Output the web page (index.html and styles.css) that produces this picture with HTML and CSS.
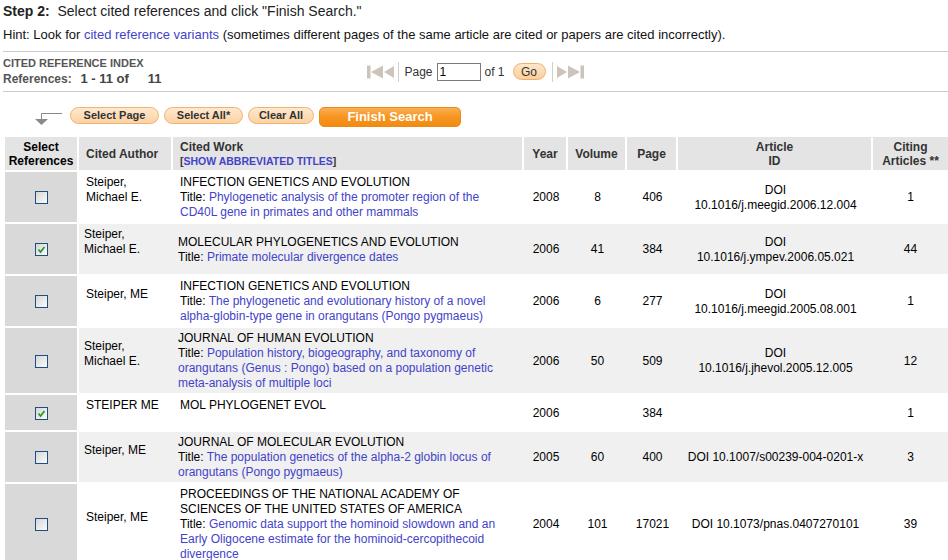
FILE: index.html
```html
<!DOCTYPE html>
<html lang="en">
<head>
<meta charset="utf-8">
<title>Cited Reference Search - Step 2</title>
<link rel="stylesheet" href="styles.css">
</head>
<body>
<div class="page">
  <p class="step"><b>Step 2:</b>&nbsp; Select cited references and click "Finish Search."</p>
  <p class="hint">Hint: Look for <a href="#">cited reference variants</a> (sometimes different pages of the same article are cited or papers are cited incorrectly).</p>

  <div class="bar">
    <div class="index-info">
      <div class="index-title">CITED REFERENCE INDEX</div>
      <div class="index-count">References:&nbsp; <span class="num">1 - 11 of<span class="total">11</span></span></div>
    </div>
    <div class="pager">
      <svg class="pg-icon" width="27" height="14" viewBox="0 0 27 14" aria-hidden="true"><rect x="0" y="0.5" width="3.5" height="13"/><polygon points="4,7 16,0.5 16,13.5"/><polygon points="17,7 27,1 27,13"/></svg>
      <span class="pg-sep pg-sep-l"></span>
      <span class="pg-label">Page</span>
      <input class="pg-input" type="text" value="1">
      <span class="pg-of">of 1</span>
      <button class="go" type="button">Go</button>
      <span class="pg-sep pg-sep-r"></span>
      <svg class="pg-icon" width="27" height="14" viewBox="0 0 27 14" aria-hidden="true"><polygon points="0,1 10,7 0,13"/><polygon points="11,0.5 23,7 11,13.5"/><rect x="23.5" y="0.5" width="3.5" height="13"/></svg>
    </div>
    <div></div>
  </div>

  <div class="actions">
    <svg class="arrow" width="28" height="16" viewBox="0 0 28 16" aria-hidden="true"><path d="M27 3.5H6.5V9.5" fill="none" stroke="#8a8a8a"/><polygon points="0,9 13,9 6.5,15" fill="#8a8a8a"/></svg>
    <button class="btn btn-page" type="button">Select Page</button>
    <button class="btn btn-all" type="button">Select All*</button>
    <button class="btn btn-clear" type="button">Clear All</button>
    <button class="finish" type="button">Finish Search</button>
  </div>

  <table class="refs">
    <colgroup>
      <col class="c-sel"><col class="c-author"><col class="c-work"><col class="c-year"><col class="c-vol"><col class="c-page"><col class="c-id"><col class="c-cite">
    </colgroup>
    <thead>
      <tr>
        <th class="sel-h">Select<br>References</th>
        <th class="left">Cited Author</th>
        <th class="left">Cited Work<br><span class="abbr">[<a href="#">SHOW ABBREVIATED TITLES</a>]</span></th>
        <th>Year</th>
        <th>Volume</th>
        <th>Page</th>
        <th>Article<br>ID</th>
        <th>Citing<br>Articles **</th>
      </tr>
    </thead>
    <tbody>
      <tr>
        <td class="sel"><span class="cb"></span></td>
        <td class="author">Steiper, Michael E.</td>
        <td class="work"><div>INFECTION GENETICS AND EVOLUTION</div><div>Title: <a href="#">Phylogenetic analysis of the promoter region of the CD40L gene in primates and other mammals</a></div></td>
        <td>2008</td>
        <td>8</td>
        <td>406</td>
        <td class="doi">DOI<br>10.1016/j.meegid.2006.12.004</td>
        <td>1</td>
      </tr>
      <tr class="alt">
        <td class="sel"><span class="cb checked"><svg viewBox="0 0 11 11" width="11" height="11"><path d="M2.5 5.5 L4.5 8 L8.5 3" fill="none" stroke="#2d9a2d" stroke-width="1.8"/></svg></span></td>
        <td class="author">Steiper, Michael E.</td>
        <td class="work"><div>MOLECULAR PHYLOGENETICS AND EVOLUTION</div><div>Title: <a href="#">Primate molecular divergence dates</a></div></td>
        <td>2006</td>
        <td>41</td>
        <td>384</td>
        <td class="doi">DOI<br>10.1016/j.ympev.2006.05.021</td>
        <td>44</td>
      </tr>
      <tr>
        <td class="sel"><span class="cb"></span></td>
        <td class="author">Steiper, ME</td>
        <td class="work"><div>INFECTION GENETICS AND EVOLUTION</div><div>Title: <a href="#">The phylogenetic and evolutionary history of a novel alpha-globin-type gene in orangutans (Pongo pygmaeus)</a></div></td>
        <td>2006</td>
        <td>6</td>
        <td>277</td>
        <td class="doi">DOI<br>10.1016/j.meegid.2005.08.001</td>
        <td>1</td>
      </tr>
      <tr class="alt">
        <td class="sel"><span class="cb"></span></td>
        <td class="author">Steiper, Michael E.</td>
        <td class="work"><div>JOURNAL OF HUMAN EVOLUTION</div><div>Title: <a href="#">Population history, biogeography, and taxonomy of orangutans (Genus : Pongo) based on a population genetic meta-analysis of multiple loci</a></div></td>
        <td>2006</td>
        <td>50</td>
        <td>509</td>
        <td class="doi">DOI<br>10.1016/j.jhevol.2005.12.005</td>
        <td>12</td>
      </tr>
      <tr>
        <td class="sel"><span class="cb checked"><svg viewBox="0 0 11 11" width="11" height="11"><path d="M2.5 5.5 L4.5 8 L8.5 3" fill="none" stroke="#2d9a2d" stroke-width="1.8"/></svg></span></td>
        <td class="author">STEIPER ME</td>
        <td class="work work-short"><div>MOL PHYLOGENET EVOL</div></td>
        <td>2006</td>
        <td></td>
        <td>384</td>
        <td class="doi"></td>
        <td>1</td>
      </tr>
      <tr class="alt">
        <td class="sel"><span class="cb"></span></td>
        <td class="author">Steiper, ME</td>
        <td class="work"><div>JOURNAL OF MOLECULAR EVOLUTION</div><div>Title: <a href="#">The population genetics of the alpha-2 globin locus of orangutans (Pongo pygmaeus)</a></div></td>
        <td>2005</td>
        <td>60</td>
        <td>400</td>
        <td class="doi">DOI 10.1007/s00239-004-0201-x</td>
        <td>3</td>
      </tr>
      <tr>
        <td class="sel"><span class="cb"></span></td>
        <td class="author">Steiper, ME</td>
        <td class="work"><div>PROCEEDINGS OF THE NATIONAL ACADEMY OF SCIENCES OF THE UNITED STATES OF AMERICA</div><div>Title: <a href="#">Genomic data support the hominoid slowdown and an Early Oligocene estimate for the hominoid-cercopithecoid divergence</a></div></td>
        <td>2004</td>
        <td>101</td>
        <td>17021</td>
        <td class="doi">DOI 10.1073/pnas.0407270101</td>
        <td>39</td>
      </tr>
    </tbody>
  </table>
</div>
</body>
</html>
```

FILE: styles.css
```css
* { box-sizing: border-box; }

body {
  margin: 0;
  background: #fff;
  color: #000;
  font-family: "Liberation Sans", Arial, sans-serif;
  font-size: 12px;
}

.page { padding-left: 3px; }

a { color: #4343c9; text-decoration: none; }

.step {
  margin: 0;
  padding-top: 3px;
  font-size: 14px;
  line-height: 16px;
  color: #222;
}

.hint {
  margin: 8px 0 0;
  font-size: 13px;
  line-height: 15px;
  color: #111;
}

/* index bar */
.bar {
  margin-top: 9px;
  border-top: 1px solid #cbcbcb;
  border-bottom: 1px solid #cbcbcb;
  padding: 4px 0;
  display: grid;
  grid-template-columns: 1fr auto 1fr;
  align-items: center;
}

.index-title {
  font-size: 11px;
  font-weight: bold;
  line-height: 14px;
  color: #555;
}

.index-count {
  margin-top: 1px;
  font-weight: bold;
  line-height: 16px;
  color: #555;
}

.index-count .num { margin-left: 2px; font-size: 13px; color: #444; }
.index-count .total { margin-left: 19px; }

.pager {
  display: flex;
  align-items: center;
  color: #333;
}

.pg-icon { fill: #ccc3b9; display: block; }

.pg-sep {
  width: 1px;
  height: 20px;
  background: #d0d0d0;
}
.pg-sep-l { margin: 0 5px 0 4px; }
.pg-sep-r { margin: 0 4px 0 6px; }

.pg-input {
  width: 44px;
  height: 18px;
  margin: 0 4px;
  padding: 0 2px;
  border: 1px solid #7b7b7b;
  font: 12px "Liberation Sans", Arial, sans-serif;
  color: #000;
}

.go {
  margin-left: 8px;
  width: 33px;
  height: 17px;
  padding: 0;
  border: 1px solid #efb06c;
  border-radius: 9px;
  background: linear-gradient(#fee6ca, #fbcf9c);
  font: 12px "Liberation Sans", Arial, sans-serif;
  color: #333;
}

/* action buttons */
.actions {
  display: flex;
  align-items: flex-start;
  gap: 5px;
  margin-top: 15px;
  height: 20px;
}

.arrow { display: block; margin: 3px 2px 0 32px; }

.btn {
  height: 17px;
  padding: 0;
  border: 1px solid #f0b26f;
  border-radius: 9px;
  background: linear-gradient(#fee8cf, #fcd2a2);
  font: bold 11px "Liberation Sans", Arial, sans-serif;
  line-height: 15px;
  color: #333;
  text-align: center;
}
.btn-page { width: 89px; }
.btn-all { width: 79px; }
.btn-clear { width: 66px; }

.finish {
  width: 142px;
  height: 20px;
  padding: 0 0 1px;
  border: 1px solid #ec8a16;
  border-radius: 5px;
  background: linear-gradient(#fbad56, #f7951f 50%, #f28b12);
  font: bold 13px "Liberation Sans", Arial, sans-serif;
  color: #fff;
}

/* references table */
.refs {
  margin: 10px 0 0 2px;
  width: 943px;
  table-layout: fixed;
  border-collapse: separate;
  border-spacing: 0;
}

.c-sel { width: 74px; }
.c-author { width: 94px; }
.c-work { width: 351px; }
.c-year { width: 44px; }
.c-vol { width: 59px; }
.c-page { width: 51px; }
.c-id { width: 195px; }
.c-cite { width: 75px; }

.refs th {
  background: #e4e4e4;
  font-weight: bold;
  color: #333;
  line-height: 14px;
  padding: 3px 2px 2px;
  border-right: 2px solid #fff;
  border-bottom: 2px solid #fff;
  text-align: center;
  vertical-align: middle;
}
.refs th:last-child { border-right: 0; }
.refs th.sel-h { color: #000; }
.refs th.left { text-align: left; padding-left: 7px; }

.abbr { font-size: 10.5px; color: #333; }

.refs td {
  line-height: 15px;
  padding: 3px 2px 2px;
  border-bottom: 2px solid #fff;
  text-align: center;
  vertical-align: middle;
}

.refs tr.alt td { background: #f0f0f0; }
.refs td.sel,
.refs tr.alt td.sel {
  background: #d9d9d9;
  border-right: 2px solid #fff;
}

.refs td.author {
  text-align: left;
  padding: 3px 4px 17px 7px;
}

.refs td.work {
  text-align: left;
  padding: 3px 12px 2px 7px;
}
.refs td.work-short { padding-bottom: 17px; }

.refs tr.alt td.author { padding-left: 5px; }
.refs tr.alt td.work { padding-left: 5px; padding-right: 14px; }

.refs td.doi { padding: 3px 4px 2px; }

.cb {
  display: inline-block;
  vertical-align: middle;
  width: 13px;
  height: 13px;
  border: 1px solid #1f4f80;
  background: linear-gradient(135deg, #d6d6d6, #fbfbfb);
}
.cb svg { display: block; }
```
